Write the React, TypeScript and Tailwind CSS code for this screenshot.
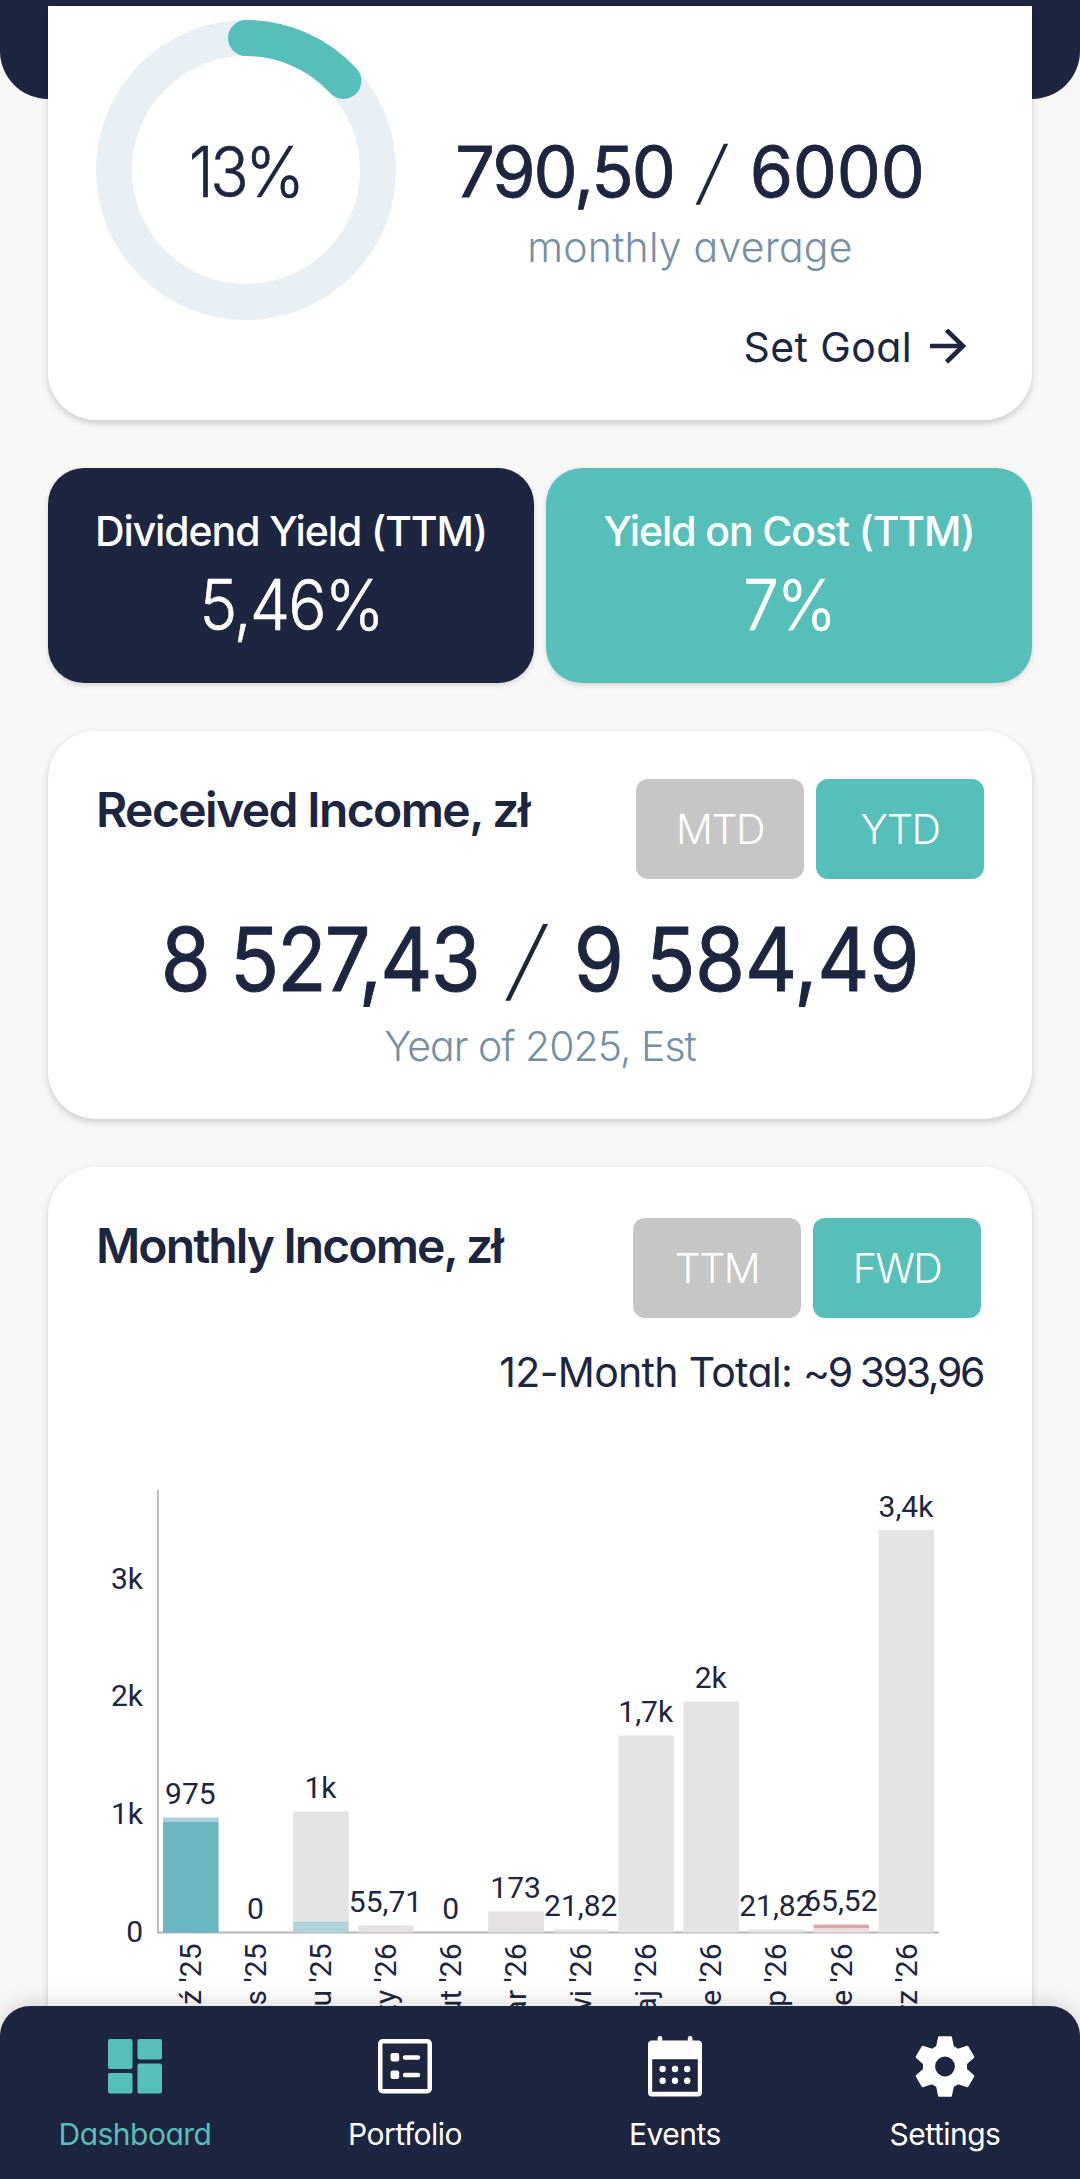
import type { ReactNode } from "react";

const INK = "#1e2540";

type Segment = { height: number; color: string };
type Month = { name: string; label: string; segments: Segment[] };

/* Segments are listed from the top of the bar downwards, heights in chart units. */
const MONTHS: Month[] = [
  { name: "paź '25", label: "975", segments: [{ height: 4.5, color: "#a9d0d5" }, { height: 110.5, color: "#6ab7c1" }] },
  { name: "lis '25", label: "0", segments: [] },
  { name: "gru '25", label: "1k", segments: [{ height: 110, color: "#e4e4e4" }, { height: 11, color: "#b0d3da" }] },
  { name: "sty '26", label: "55,71", segments: [{ height: 7, color: "#e6e2e3" }] },
  { name: "lut '26", label: "0", segments: [] },
  { name: "mar '26", label: "173", segments: [{ height: 21, color: "#e4e2e2" }] },
  { name: "kwi '26", label: "21,82", segments: [{ height: 3, color: "#e6e2e3" }] },
  { name: "maj '26", label: "1,7k", segments: [{ height: 197, color: "#e4e4e4" }] },
  { name: "cze '26", label: "2k", segments: [{ height: 231, color: "#e4e4e4" }] },
  { name: "lip '26", label: "21,82", segments: [{ height: 3, color: "#e6e2e3" }] },
  { name: "sie '26", label: "65,52", segments: [{ height: 3.5, color: "#d9a5a6" }, { height: 4.5, color: "#ecdcdd" }] },
  { name: "wrz '26", label: "3,4k", segments: [{ height: 402.5, color: "#e4e4e4" }] },
];

const TICKS = [
  { text: "0", y: 534 },
  { text: "1k", y: 416 },
  { text: "2k", y: 298.5 },
  { text: "3k", y: 181 },
];

function IncomeChart() {
  const base = 535.5;
  return (
    <svg width="984" height="700" viewBox="0 0 984 700" className="-ml-12 block shrink-0 [font-family:Roboto,sans-serif]" fontSize="30" fill={INK}>
      <rect x="109" y="93" width="2" height="443" fill="#bdbdbd" />
      <rect x="109" y="534.5" width="782" height="2" fill="#b5b5b5" />
      {TICKS.map((t) => (
        <text key={t.text} x="95" y={t.y + 10.5} textAnchor="end">
          {t.text}
        </text>
      ))}
      {MONTHS.map((m, i) => {
        const x = 115 + i * 65.05;
        const total = m.segments.reduce((sum, s) => sum + s.height, 0);
        let y = base - total;
        return (
          <g key={m.name}>
            {m.segments.map((s, k) => {
              const top = y;
              y += s.height;
              return <rect key={k} x={x} y={top} width="55.6" height={s.height} fill={s.color} />;
            })}
            <text x={x + 27.4} y={base - total - 13.5} textAnchor="middle">
              {m.label}
            </text>
            <text transform={`translate(${x + 38} 546.500) rotate(-90)`} textAnchor="end">
              {m.name}
            </text>
          </g>
        );
      })}
    </svg>
  );
}

function ProgressRing({ value }: { value: number }) {
  const r = 132;
  const length = 2 * Math.PI * r;
  return (
    <div className="relative size-[300px] shrink-0">
      <svg width="300" height="300" viewBox="0 0 300 300" fill="none" strokeWidth="36">
        <circle cx="150" cy="150" r={r} stroke="#e9eff3" />
        <circle
          cx="150"
          cy="150"
          r={r}
          stroke="#57bfba"
          strokeLinecap="round"
          strokeDasharray={`${length * value} ${length}`}
          transform="rotate(-90 150 150)"
        />
      </svg>
      <div className="absolute inset-0 flex scale-x-[0.91] items-center justify-center pt-[3px] pr-[2px] text-[70px] leading-[80px] font-light tracking-[-4px] [-webkit-text-stroke:0.6px_currentColor]">
        13%
      </div>
    </div>
  );
}

function Stat({ label, value, className }: { label: string; value: string; className: string }) {
  return (
    <div className={`h-[215px] flex-1 rounded-[36px] pt-[38px] text-center text-white shadow-[0_2px_5px_rgba(0,0,0,0.14)] ${className}`}>
      <div className="text-[41px] leading-[50px] font-medium tracking-[-1.1px] whitespace-nowrap">{label}</div>
      <div className="mt-[14px] scale-x-[0.91] text-[70px] leading-[70px] font-light tracking-[-2px] [-webkit-text-stroke:0.6px_currentColor]">{value}</div>
    </div>
  );
}

function Toggle({ options, className = "" }: { options: [string, string]; className?: string }) {
  return (
    <div className={`flex gap-3 text-[41px] leading-[50px] font-light tracking-[-1.5px] text-white ${className}`}>
      <button className="h-[100px] w-[168px] rounded-xl bg-[#c6c6c6]">{options[0]}</button>
      <button className="h-[100px] w-[168px] rounded-xl bg-[#57bfba]">{options[1]}</button>
    </div>
  );
}

function DashboardIcon() {
  return (
    <svg width="54" height="60" viewBox="0 0 54 60" fill="currentColor">
      <rect x="0" y="3" width="24.5" height="30" rx="2" />
      <rect x="0" y="37" width="24.5" height="20.5" rx="2" />
      <rect x="29.5" y="3" width="24.5" height="20.5" rx="2" />
      <rect x="29.5" y="27.5" width="24.5" height="30" rx="2" />
    </svg>
  );
}

function PortfolioIcon() {
  return (
    <svg width="54" height="60" viewBox="0 0 54 60" fill="currentColor">
      <rect x="2.25" y="5.25" width="49.5" height="50" rx="2.5" fill="none" stroke="currentColor" strokeWidth="4.5" />
      <rect x="12.6" y="17" width="8.6" height="8.6" rx="2" />
      <rect x="24.8" y="19.2" width="17.4" height="4.5" rx="2.2" />
      <rect x="12.6" y="34.5" width="8.6" height="8.6" rx="2" />
      <rect x="24.8" y="36.7" width="17.4" height="4.5" rx="2.2" />
    </svg>
  );
}

function EventsIcon() {
  return (
    <svg width="54" height="61" viewBox="0 0 54 61" fill="currentColor">
      <rect x="9.6" y="0" width="4.6" height="12" rx="2.3" />
      <rect x="39.8" y="0" width="4.6" height="12" rx="2.3" />
      <path fillRule="evenodd" d="M4 4.5H50a4 4 0 0 1 4 4V56.500a4 4 0 0 1-4 4H4a4 4 0 0 1-4-4V8.500a4 4 0 0 1 4-4ZM4.200 23.300V55.800H49.800V23.300Z" />
      {[33, 44.8].map((cy) => [14.6, 27, 39.2].map((cx) => <circle key={`${cx}-${cy}`} cx={cx} cy={cy} r="3.2" />))}
    </svg>
  );
}

function SettingsIcon() {
  const tooth = [
    [-8, -19.8],
    [-6, -29.4],
    [6, -29.4],
    [8, -19.8],
  ];
  const points = [0, 1, 2, 3, 4, 5]
    .flatMap((n) => {
      const a = (n * Math.PI) / 3;
      return tooth.map(([x, y]) => `${x * Math.cos(a) - y * Math.sin(a)},${x * Math.sin(a) + y * Math.cos(a)}`);
    })
    .join(" ");
  return (
    <svg width="60" height="61" viewBox="-30 -30.500 60 61">
      <polygon points={points} fill="currentColor" stroke="currentColor" strokeWidth="1.8" strokeLinejoin="round" />
      <circle r="9.900" fill={INK} />
    </svg>
  );
}

function NavItem({ icon, label, className = "text-white" }: { icon: ReactNode; label: string; className?: string }) {
  return (
    <a className={`flex w-1/4 flex-col items-center pt-[30px] text-[30px] leading-[40px] tracking-[-0.5px] ${className}`}>
      <span className="flex h-[61px] items-start">{icon}</span>
      <span className="mt-[17px]">{label}</span>
    </a>
  );
}

const CARD = "rounded-[48px] bg-white shadow-[0_3px_7px_rgba(0,0,0,0.18)]";

export default function App() {
  return (
    <div className="relative h-[2179px] w-[1080px] overflow-hidden bg-[#f7f7f7] text-[#1e2540] [font-family:Inter,sans-serif] [font-feature-settings:'cv11']">
      <div className="absolute inset-x-0 top-0 h-[99px] rounded-b-[48px] bg-[#1e2540]" />

      <main className="relative flex flex-col gap-12 px-12 pt-[6px]">
        <section className="flex h-[414px] rounded-b-[48px] bg-white px-12 pt-[14px] shadow-[0_3px_7px_rgba(0,0,0,0.18)]">
          <ProgressRing value={0.132} />
          <div className="flex flex-1 flex-col items-center pt-[112px]">
            <div className="text-[70px] leading-[80px] whitespace-nowrap">
              <span className="tracking-[-2px] [-webkit-text-stroke:0.8px_currentColor]">790,50</span>{" "}
              <span className="mx-[6px] inline-block -skew-x-[11deg] font-light">/</span>{" "}
              <span className="tracking-[-0.2px] [-webkit-text-stroke:0.8px_currentColor]">6000</span>
            </div>
            <div className="mt-[10px] text-[41px] leading-[50px] font-light tracking-[0.2px] text-[#778fa2]">monthly average</div>
            <div className="mt-[50px] flex items-center gap-[18px] self-end pr-[18px] text-[41px] leading-[50px] tracking-[0.4px]">
              Set Goal
              <svg width="36" height="36" viewBox="0 0 36 36" fill="none" stroke="currentColor" strokeWidth="4.600">
                <path d="M0 17H33M16.500 1L33 17L16.500 33" />
              </svg>
            </div>
          </div>
        </section>

        <section className="flex gap-3">
          <Stat label="Dividend Yield (TTM)" value="5,46%" className="bg-[#1e2540]" />
          <Stat label="Yield on Cost (TTM)" value="7%" className="bg-[#57bfba]" />
        </section>

        <section className={`flex h-[388px] flex-col px-12 pt-12 ${CARD}`}>
          <div className="flex items-start justify-between">
            <h2 className="mt-px text-[48px] leading-[60px] font-semibold tracking-[-1.6px] whitespace-nowrap">Received Income, zł</h2>
            <Toggle options={["MTD", "YTD"]} />
          </div>
          <div className="mt-[30px] scale-x-[0.92] text-center text-[88px] leading-[100px] whitespace-nowrap">
            <span className="tracking-[-2px] [-webkit-text-stroke:1px_currentColor]">8 527,43</span>{" "}
            <span className="mr-[10px] ml-[13px] inline-block -skew-x-[15deg] font-light">/</span>{" "}
            <span className="tracking-[-0.3px] [-webkit-text-stroke:1px_currentColor]">9 584,49</span>
          </div>
          <div className="mt-3 text-center text-[41px] leading-[50px] font-light tracking-[-1px] text-[#778fa2]">Year of 2025, Est</div>
        </section>

        <section className={`flex flex-col px-12 pt-12 ${CARD}`}>
          <div className="flex items-start justify-between">
            <h2 className="mt-px text-[48px] leading-[60px] font-semibold tracking-[-1.9px] whitespace-nowrap">Monthly Income, zł</h2>
            <Toggle options={["TTM", "FWD"]} className="mt-[3px] mr-[3px]" />
          </div>
          <div className="mt-[29px] pr-px text-right text-[41px] leading-[50px] tracking-[-0.7px]">
            12-Month Total: <span className="tracking-[-2.4px]">~9 393,96</span>
          </div>
          <IncomeChart />
        </section>
      </main>

      <nav className="absolute inset-x-0 bottom-0 flex h-[173px] rounded-t-[30px] bg-[#1e2540] shadow-[0_0_24px_rgba(0,0,0,0.18)]">
        <NavItem icon={<DashboardIcon />} label="Dashboard" className="text-[#57bfba]" />
        <NavItem icon={<PortfolioIcon />} label="Portfolio" />
        <NavItem icon={<EventsIcon />} label="Events" />
        <NavItem icon={<SettingsIcon />} label="Settings" />
      </nav>
    </div>
  );
}
